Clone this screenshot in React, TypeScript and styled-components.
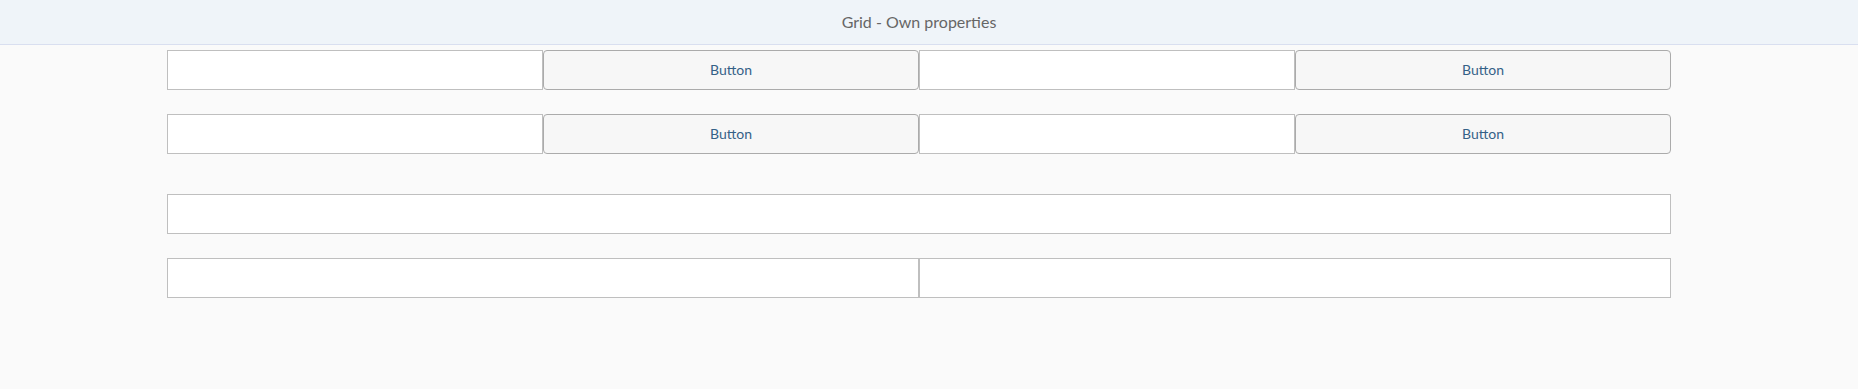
import React from 'react'
import styled, { createGlobalStyle } from 'styled-components'

const GlobalStyle = createGlobalStyle`
  html, body {
    margin: 0;
    padding: 0;
    background: #fafafa;
    font-family: Lato, 'Open Sans', sans-serif;
  }
`

const Page = styled.div`
  width: 1838px;
  min-height: 389px;
  background: #fafafa;
`

const Header = styled.header`
  height: 45px;
  display: flex;
  align-items: center;
  background: #eff4f9;
  border-bottom: 1px solid #d9dff0;
  box-sizing: border-box;
  width: 1858px;
`

const Title = styled.h1`
  margin: 0 0 2px;
  width: 1838px;
  text-align: center;
  font-size: 16px;
  font-weight: 400;
  color: #666666;
`

const Content = styled.main`
  padding: 5px 167px 0;
  display: flex;
  flex-direction: column;
  gap: 40px;
`

const Grid = styled.div<{ $cols: number }>`
  display: grid;
  grid-template-columns: repeat(${(p) => p.$cols}, 1fr);
  row-gap: 24px;
  width: 1504px;
`

const Input = styled.input<{ $span?: number }>`
  grid-column: span ${(p) => p.$span ?? 1};
  height: 40px;
  box-sizing: border-box;
  margin: 0;
  border: 1px solid #bfbfbf;
  background: #ffffff;
  border-radius: 0;
  padding: 0 12px;
  font-family: inherit;
  font-size: 14px;
  outline: none;
`

const Button = styled.button`
  height: 40px;
  box-sizing: border-box;
  margin: 0;
  padding: 0 0 2px;
  border: 1px solid #ababab;
  border-radius: 4px;
  background: #f7f7f7;
  color: #346187;
  font-family: inherit;
  font-size: 14px;
  cursor: pointer;
`

export default function App() {
  return (
    <>
      <GlobalStyle />
      <Page>
        <Header>
          <Title>Grid - Own properties</Title>
        </Header>
        <Content>
          <Grid $cols={4}>
            <Input />
            <Button>Button</Button>
            <Input />
            <Button>Button</Button>
            <Input />
            <Button>Button</Button>
            <Input />
            <Button>Button</Button>
          </Grid>
          <Grid $cols={2}>
            <Input $span={2} />
            <Input />
            <Input />
          </Grid>
        </Content>
      </Page>
    </>
  )
}
